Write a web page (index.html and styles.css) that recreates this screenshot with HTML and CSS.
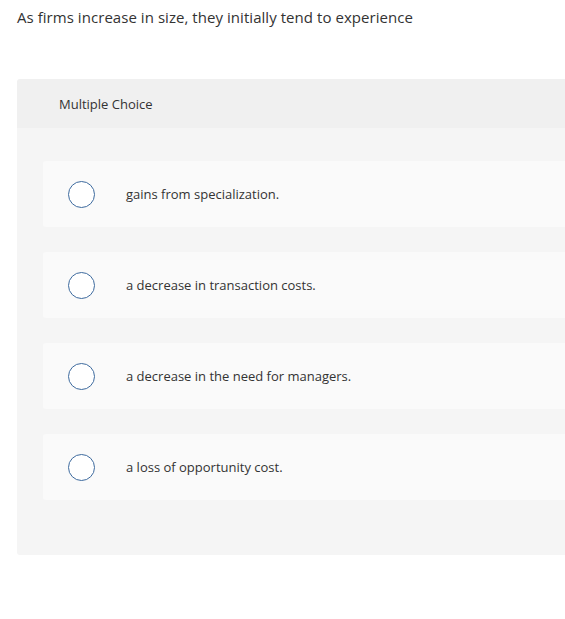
FILE: index.html
```html
<!DOCTYPE html>
<html>
<head>
<meta charset="utf-8">
<link rel="stylesheet" href="styles.css">
</head>
<body>
<p class="question">As firms increase in size, they initially tend to experience</p>
<div class="card">
  <div class="card-head">Multiple Choice</div>
  <div class="card-body">
    <div class="option"><span class="radio"></span><span class="label">gains from specialization.</span></div>
    <div class="option"><span class="radio"></span><span class="label">a decrease in transaction costs.</span></div>
    <div class="option"><span class="radio"></span><span class="label">a decrease in the need for managers.</span></div>
    <div class="option"><span class="radio"></span><span class="label">a loss of opportunity cost.</span></div>
  </div>
</div>
</body>
</html>
```
FILE: styles.css
```css
html, body {
  margin: 0;
  padding: 0;
  background: #ffffff;
}
body {
  font-family: "Open Sans", "Liberation Sans", sans-serif;
  color: #333333;
  padding: 0 0 0 17px;
}
.question {
  margin: 0;
  padding-top: 6px;
  font-size: 15px;
  line-height: 22px;
  height: 73px;
  letter-spacing: 0.05px;
}
.card {
  border-radius: 3px 0 0 3px;
  overflow: hidden;
}
.card-head {
  background: #f0f0f0;
  height: 49px;
  padding-left: 42px;
  display: flex;
  align-items: center;
  font-size: 13px;
}
.card-body {
  background: #f5f5f5;
  padding: 33px 0 55px 26px;
  display: flex;
  flex-direction: column;
  gap: 25px;
}
.option {
  background: #fafafa;
  height: 66px;
  border-radius: 3px 0 0 3px;
  display: flex;
  align-items: center;
  padding-left: 25px;
}
.radio {
  width: 25px;
  height: 25px;
  border: 1.5px solid #3d6a9e;
  border-radius: 50%;
  background: #ffffff;
  flex: none;
}
.label {
  margin-left: 31px;
  font-size: 13px;
}
```
